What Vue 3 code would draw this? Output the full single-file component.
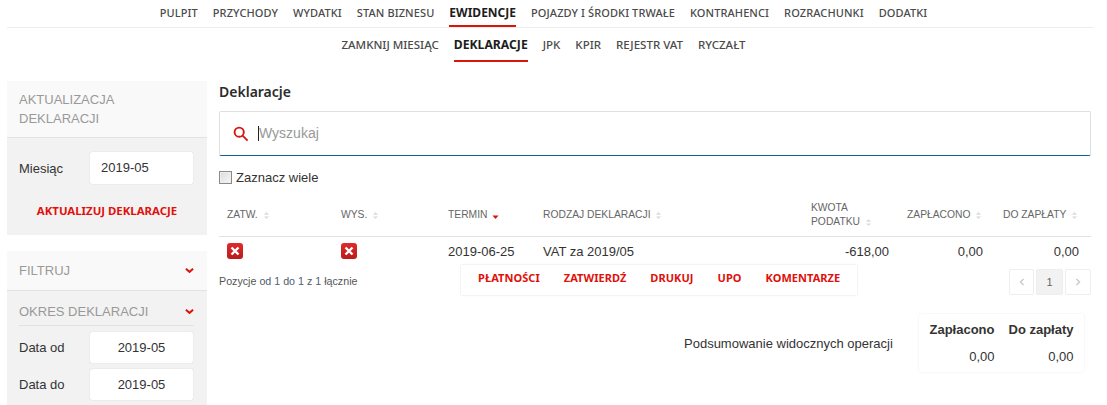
<template>
  <div class="page">
    <nav class="nav-main">
      <a v-for="item in mainNav" :key="item" :class="{ active: item === 'EWIDENCJE' }">{{ item }}</a>
    </nav>
    <nav class="nav-sub">
      <a v-for="item in subNav" :key="item" :class="{ active: item === 'DEKLARACJE' }">{{ item }}</a>
    </nav>

    <div class="layout">
      <aside class="sidebar">
        <section class="panel">
          <div class="panel-head tall">AKTUALIZACJA DEKLARACJI</div>
          <div class="panel-body first">
            <div class="field">
              <label>Miesiąc</label>
              <div class="date-box left">2019-05</div>
            </div>
            <a class="update-link">AKTUALIZUJ DEKLARACJE</a>
          </div>
        </section>

        <section class="panel">
          <div class="panel-head filter">
            <span>FILTRUJ</span>
            <svg class="chev" viewBox="0 0 10 7"><path d="M1 1.5 5 5l4-3.5" /></svg>
          </div>
          <div class="panel-body">
            <div class="group-title">
              <span>OKRES DEKLARACJI</span>
              <svg class="chev" viewBox="0 0 10 7"><path d="M1 1.5 5 5l4-3.5" /></svg>
            </div>
            <div class="field compact">
              <label>Data od</label>
              <div class="date-box">2019-05</div>
            </div>
            <div class="field compact">
              <label>Data do</label>
              <div class="date-box">2019-05</div>
            </div>
          </div>
        </section>
      </aside>

      <main class="main">
        <h1>Deklaracje</h1>
        <div class="search">
          <svg class="search-icon" viewBox="0 0 16 16">
            <circle cx="6.2" cy="6.2" r="4.6" />
            <path d="m9.6 9.6 5 5" />
          </svg>
          <span class="caret"></span>
          <input type="text" placeholder="Wyszukaj" />
        </div>
        <label class="check-row"><span class="check"></span>Zaznacz wiele</label>

        <div class="table-wrap">
          <table>
            <colgroup>
              <col v-for="c in columns" :key="c.label" :style="{ width: c.width + 'px' }" />
            </colgroup>
            <thead>
              <tr>
                <th v-for="c in columns" :key="c.label">
                  {{ c.label }}
                  <svg v-if="c.sorted" class="sort" viewBox="0 0 8 10"><path class="red" d="M0.5 5h7L4 9z" /></svg>
                  <svg v-else class="sort" viewBox="0 0 8 10"><path d="M1 4 4 1l3 3zM1 6l3 3 3-3z" /></svg>
                </th>
              </tr>
            </thead>
            <tbody>
              <tr>
                <td><span class="x-badge"><svg viewBox="0 0 16 16"><path d="m4.5 4.5 7 7M11.5 4.5l-7 7" /></svg></span></td>
                <td><span class="x-badge"><svg viewBox="0 0 16 16"><path d="m4.5 4.5 7 7M11.5 4.5l-7 7" /></svg></span></td>
                <td>2019-06-25</td>
                <td>VAT za 2019/05</td>
                <td class="num kwota">-618,00</td>
                <td class="num">0,00</td>
                <td class="num">0,00</td>
              </tr>
            </tbody>
          </table>

          <div class="table-foot">
            <div class="info">Pozycje <b>od 1 do 1 z 1</b> łącznie</div>
            <div class="pager">
              <span class="pg prev"><svg viewBox="0 0 6 10"><path d="M4.5 2 1.5 5l3 3" /></svg></span>
              <span class="pg current">1</span>
              <span class="pg next"><svg viewBox="0 0 6 10"><path d="m1.5 2 3 3-3 3" /></svg></span>
            </div>
          </div>

          <div class="row-actions">
            <a v-for="a in actions" :key="a">{{ a }}</a>
          </div>
        </div>

        <div class="summary">
          <span class="summary-label">Podsumowanie widocznych operacji</span>
          <div class="summary-box">
            <div class="s-head">Zapłacono</div>
            <div class="s-head">Do zapłaty</div>
            <div class="s-val">0,00</div>
            <div class="s-val">0,00</div>
          </div>
        </div>
      </main>
    </div>
  </div>
</template>

<script setup>
const mainNav = ['PULPIT', 'PRZYCHODY', 'WYDATKI', 'STAN BIZNESU', 'EWIDENCJE', 'POJAZDY I ŚRODKI TRWAŁE', 'KONTRAHENCI', 'ROZRACHUNKI', 'DODATKI'];
const subNav = ['ZAMKNIJ MIESIĄC', 'DEKLARACJE', 'JPK', 'KPIR', 'REJESTR VAT', 'RYCZAŁT'];
const actions = ['PŁATNOŚCI', 'ZATWIERDŹ', 'DRUKUJ', 'UPO', 'KOMENTARZE'];
const columns = [
  { label: 'ZATW.', width: 114 },
  { label: 'WYS.', width: 107 },
  { label: 'TERMIN', width: 95, sorted: true },
  { label: 'RODZAJ DEKLARACJI', width: 268 },
  { label: 'KWOTA PODATKU', width: 96 },
  { label: 'ZAPŁACONO', width: 96 },
  { label: 'DO ZAPŁATY', width: 96 },
];
</script>

<style>
html, body {
  margin: 0;
  background: #fff;
  overflow: hidden;
}
</style>

<style scoped>
.page {
  width: 1107px;
  height: 405px;
  padding: 0 13px 0 7px;
  box-sizing: border-box;
  overflow: hidden;
  font-family: "Liberation Sans", Arial, sans-serif;
  font-size: 13px;
  color: #333;
}

.nav-main, .nav-sub {
  display: flex;
  justify-content: center;
  padding-right: 14px;
  font-family: "Noto Sans", sans-serif;
  font-size: 11px;
  font-weight: 500;
  color: #4a4a4a;
}
.nav-main {
  height: 27px;
  gap: 15px;
  border-bottom: 1px solid #eee;
  letter-spacing: 0.1px;
}
.nav-main a, .nav-sub a {
  display: block;
  height: 100%;
  line-height: 25px;
  box-sizing: border-box;
  white-space: nowrap;
}
.nav-sub {
  height: 34px;
  gap: 15px;
  font-size: 11.5px;
}
.nav-sub a { line-height: 34px; }
.nav-main a.active {
  color: #1d1d1d;
  font-size: 12px;
  font-weight: 700;
  letter-spacing: 0;
  border-bottom: 2px solid #d8160d;
}
.nav-sub a.active {
  color: #1d1d1d;
  font-size: 12.2px;
  font-weight: 700;
  border-bottom: 2px solid #d8160d;
}

.layout {
  display: flex;
  margin-top: 19px;
}

.sidebar {
  width: 200px;
  flex: none;
}
.panel { margin-bottom: 16px; }
.panel-head {
  background: #f9f9f9;
  border-bottom: 1px solid #e2e2e2;
  color: #999;
  padding: 0 13px 0 12px;
}
.panel-head.tall {
  height: 57px;
  box-sizing: border-box;
  padding-top: 9px;
  line-height: 19px;
}
.panel-head.filter {
  height: 40px;
  box-sizing: border-box;
  display: flex;
  justify-content: space-between;
  align-items: center;
}
.panel-body {
  background: #f2f2f2;
  padding: 0 14px 0 12px;
  height: 120px;
}
.panel-body.first {
  height: 97px;
  padding-top: 14px;
  box-sizing: border-box;
}
.field {
  display: flex;
  align-items: center;
  justify-content: space-between;
}
.field.compact { margin-top: 6px; }
.date-box {
  width: 103px;
  height: 31px;
  line-height: 31px;
  background: #fff;
  border-radius: 2px;
  box-shadow: 0 0 1px #bbb;
  text-align: center;
  color: #333;
}
.date-box.left {
  height: 32px;
  line-height: 32px;
  text-align: left;
  padding-left: 11px;
  width: 103px;
  box-sizing: border-box;
}
.update-link {
  display: block;
  margin-top: 19px;
  padding-left: 2px;
  text-align: center;
  font-family: "Noto Sans", sans-serif;
  font-weight: 700;
  font-size: 11.4px;
  color: #e0100b;
  white-space: nowrap;
}
.group-title {
  height: 35px;
  box-sizing: border-box;
  padding-top: 6px;
  margin-right: -1px;
  border-bottom: 1px solid #e2e2e2;
  display: flex;
  justify-content: space-between;
  align-items: center;
  color: #999;
}
.chev {
  width: 9px;
  height: 7px;
  fill: none;
  stroke: #d8160d;
  stroke-width: 2.2;
}

.main {
  width: 872px;
  margin-left: 12px;
  flex: none;
}
h1 {
  margin: 0;
  height: 30px;
  line-height: 22px;
  font-family: "Noto Sans", sans-serif;
  font-size: 14px;
  font-weight: 600;
  color: #2b2b2b;
}
.search {
  height: 45px;
  box-sizing: border-box;
  border: 1px solid #e0e0e0;
  border-bottom: 1px solid #17618f;
  border-radius: 2px;
  display: flex;
  align-items: center;
  padding-left: 13px;
}
.search-icon {
  width: 16px;
  height: 16px;
  fill: none;
  stroke: #d8160d;
  stroke-width: 1.9;
}
.caret {
  width: 1px;
  height: 15px;
  background: #222;
  margin-left: 9px;
}
.search input {
  flex: 1;
  border: 0;
  outline: 0;
  padding: 0 0 2px;
  font: 14px "Liberation Sans", Arial, sans-serif;
  background: transparent;
}
.search input::placeholder { color: #999; opacity: 1; }
.check-row {
  display: flex;
  align-items: center;
  height: 16px;
  margin-top: 13px;
  color: #333;
}
.check {
  width: 11px;
  height: 11px;
  border: 1px solid #8a8a8a;
  background: linear-gradient(135deg, #dcdcdc, #f6f6f6);
  box-shadow: inset 0 0 0 1px #eee;
  margin-right: 4px;
}

.table-wrap {
  position: relative;
  margin-top: 13px;
}
table {
  width: 872px;
  table-layout: fixed;
  border-collapse: collapse;
}
th {
  height: 34px;
  padding: 0 8px 4px;
  text-align: left;
  border-bottom: 1px solid #e2e2e2;
  font-size: 10.3px;
  font-weight: 400;
  color: #666;
  line-height: 14px;
}
.sort {
  width: 7px;
  height: 9px;
  fill: #dcdcdc;
  margin-left: 2px;
  vertical-align: -2px;
}
.sort .red { fill: #d8160d; }
td {
  height: 28px;
  padding: 0 8px;
  color: #333;
}
td.num {
  text-align: right;
  padding-right: 12px;
}
td.kwota { padding-right: 10px; }
.x-badge {
  display: block;
  width: 16px;
  height: 16px;
  border-radius: 3px;
  background: linear-gradient(#e12a2a, #b91c1c);
}
.x-badge svg {
  display: block;
  fill: none;
  stroke: #fff;
  stroke-width: 2.4;
}
.table-foot {
  display: flex;
  justify-content: space-between;
  align-items: flex-start;
  padding-top: 4px;
}
.info {
  font-size: 10.7px;
  color: #555;
  padding-top: 6px;
}
.info b {
  font-weight: 400;
  color: #4d6070;
}
.pager {
  display: flex;
  gap: 2px;
}
.pg {
  height: 26px;
  box-sizing: border-box;
  border: 1px solid #eee;
  display: flex;
  align-items: center;
  justify-content: center;
  border-radius: 2px;
  font-size: 11px;
  color: #666;
}
.pg.prev { width: 25px; }
.pg.next { width: 26px; }
.pg.current {
  width: 27px;
  background: #f2f2f2;
}
.pg svg {
  width: 6px;
  height: 10px;
  fill: none;
  stroke: #ccc;
  stroke-width: 1.5;
}
.row-actions {
  position: absolute;
  left: 242px;
  top: 67px;
  width: 396px;
  height: 30px;
  box-sizing: border-box;
  display: flex;
  gap: 24px;
  align-items: center;
  padding: 0 0 6px 17px;
  background: #fff;
  box-shadow: 0 0 2px #ddd;
  font-family: "Noto Sans", sans-serif;
  font-weight: 700;
  font-size: 11px;
  letter-spacing: 0.05px;
  color: #e0100b;
}

.summary {
  display: flex;
  align-items: center;
  margin-top: 19px;
  padding-left: 465px;
}
.summary-label { width: 235px; }
.summary-box {
  width: 165px;
  height: 58px;
  box-sizing: border-box;
  display: grid;
  grid-template-columns: auto auto;
  grid-template-rows: 30px 24px;
  column-gap: 14px;
  justify-content: center;
  align-items: center;
  box-shadow: 0 0 2px #e4e4e4;
  border-radius: 2px;
}
.s-head {
  font-weight: 700;
  color: #333;
}
.s-val {
  text-align: right;
  color: #333;
}
</style>
